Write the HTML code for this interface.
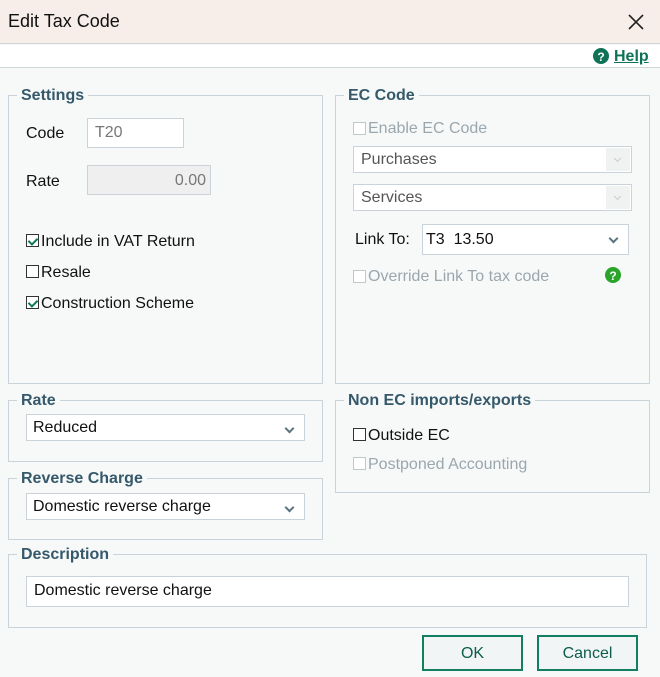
<!DOCTYPE html>
<html><head><meta charset="utf-8"><style>
*{box-sizing:border-box;margin:0;padding:0}
body{width:660px;height:677px;overflow:hidden;background:#f7f9f9;font-family:"Liberation Sans","DejaVu Sans",sans-serif;font-size:16px;color:#111;position:relative}
.a{position:absolute}
span.a{margin-top:1px}
.title{left:0;top:0;width:660px;height:44px;background:#f7eeea;border-bottom:1px solid #cfd6da}
.title span{position:absolute;left:8px;top:11px;font-size:18px}
.help{left:0;top:45px;width:660px;height:23px;background:#fff;border-bottom:1px solid #cfd6da}
.fs{position:absolute;border:1px solid #c9d3d9}
.lg{position:absolute;top:-10px;left:8px;background:#f7f9f9;padding:0 4px;font-weight:bold;font-size:16px;color:#35596b;line-height:20px}
.in{position:absolute;background:#fff;border:1px solid #c9d3d9;padding-left:7px;line-height:27px}
.dd:after{content:"";position:absolute;right:11px;top:10px;width:5px;height:5px;border-right:2px solid #5a7480;border-bottom:2px solid #5a7480;transform:rotate(45deg)}
.dis2:after{content:"";position:absolute;right:10px;top:8px;width:4px;height:4px;border-right:1.5px solid #c4ccd0;border-bottom:1.5px solid #c4ccd0;transform:rotate(45deg)}
.cb{position:absolute;width:13px;height:13px;border:1px solid #333;background:#fff}
.cb.dis{border-color:#c0c8cc}
.cb.chk:after{content:"";position:absolute;left:3px;top:1px;width:4px;height:7px;border-right:2px solid #0e7a5a;border-bottom:2px solid #0e7a5a;transform:rotate(45deg)}
.gray{color:#9aa7ae}
.btn{position:absolute;top:635px;width:101px;height:36px;border:2px solid #128060;background:#f2f5f5;color:#0e5c4a;text-align:center;line-height:34px;font-size:16px}
</style></head><body>
<div class="a title"><span>Edit Tax Code</span>
<svg class="a" style="left:627px;top:13px" width="18" height="18"><path d="M2 2L16 16M16 2L2 16" stroke="#222" stroke-width="1.6"/></svg></div>
<div class="a help">
<svg class="a" style="left:593px;top:3px" width="16" height="16"><circle cx="8" cy="8" r="8" fill="#0e7356"/><text x="8" y="13" text-anchor="middle" font-size="12" font-weight="bold" fill="#fff" font-family="Liberation Sans">?</text></svg>
<span class="a" style="left:614px;top:2px;font-weight:bold;color:#0e7356;text-decoration:underline">Help</span></div>

<div class="fs" style="left:8px;top:95px;width:315px;height:289px"><div class="lg">Settings</div></div>
<span class="a" style="left:26px;top:124px">Code</span>
<div class="in" style="left:87px;top:118px;width:97px;height:30px;color:#777;line-height:28px">T20</div>
<span class="a" style="left:26px;top:172px">Rate</span>
<div class="in" style="left:87px;top:165px;width:124px;height:30px;background:#efefef;text-align:right;padding-right:4px;color:#777;line-height:29px">0.00</div>
<div class="cb chk" style="left:26px;top:234px"></div><span class="a" style="left:41px;top:232px">Include in VAT Return</span>
<div class="cb" style="left:26px;top:265px"></div><span class="a" style="left:41px;top:263px">Resale</span>
<div class="cb chk" style="left:26px;top:296px"></div><span class="a" style="left:41px;top:294px">Construction Scheme</span>

<div class="fs" style="left:335px;top:95px;width:315px;height:289px"><div class="lg">EC Code</div></div>
<div class="cb dis" style="left:353px;top:122px"></div><span class="a gray" style="left:368px;top:119px">Enable EC Code</span>
<div class="in" style="left:353px;top:146px;width:279px;height:27px;color:#555;line-height:26px">Purchases<div class="a dis2" style="right:1px;top:1px;width:24px;height:23px;background:#f0f1f1"></div></div>
<div class="in" style="left:353px;top:184px;width:279px;height:27px;color:#555;line-height:26px">Services<div class="a dis2" style="right:1px;top:1px;width:24px;height:23px;background:#f0f1f1"></div></div>
<span class="a" style="left:355px;top:230px">Link To:</span>
<div class="in dd" style="left:422px;top:224px;width:207px;height:31px;line-height:30px;padding-left:3px">T3&nbsp;&nbsp;13.50</div>
<div class="cb dis" style="left:353px;top:270px"></div><span class="a gray" style="left:368px;top:267px">Override Link To tax code</span>
<svg class="a" style="left:605px;top:267px" width="16" height="16"><circle cx="8" cy="8" r="8" fill="#2aa52a"/><text x="8" y="13" text-anchor="middle" font-size="12" font-weight="bold" fill="#fff" font-family="Liberation Sans">?</text></svg>

<div class="fs" style="left:8px;top:400px;width:315px;height:62px"><div class="lg">Rate</div></div>
<div class="in dd" style="left:26px;top:414px;width:279px;height:27px;line-height:26px;padding-left:6px">Reduced</div>
<div class="fs" style="left:8px;top:478px;width:315px;height:62px"><div class="lg">Reverse Charge</div></div>
<div class="in dd" style="left:26px;top:493px;width:279px;height:27px;line-height:26px;padding-left:6px">Domestic reverse charge</div>

<div class="fs" style="left:335px;top:400px;width:315px;height:93px"><div class="lg">Non EC imports/exports</div></div>
<div class="cb" style="left:353px;top:428px"></div><span class="a" style="left:368px;top:426px">Outside EC</span>
<div class="cb dis" style="left:353px;top:457px"></div><span class="a gray" style="left:368px;top:455px">Postponed Accounting</span>

<div class="fs" style="left:8px;top:554px;width:639px;height:74px"><div class="lg">Description</div></div>
<div class="in" style="left:26px;top:576px;width:603px;height:31px;line-height:28px;padding-left:7px">Domestic reverse charge</div>

<div class="btn" style="left:422px">OK</div>
<div class="btn" style="left:537px">Cancel</div>
</body></html>
